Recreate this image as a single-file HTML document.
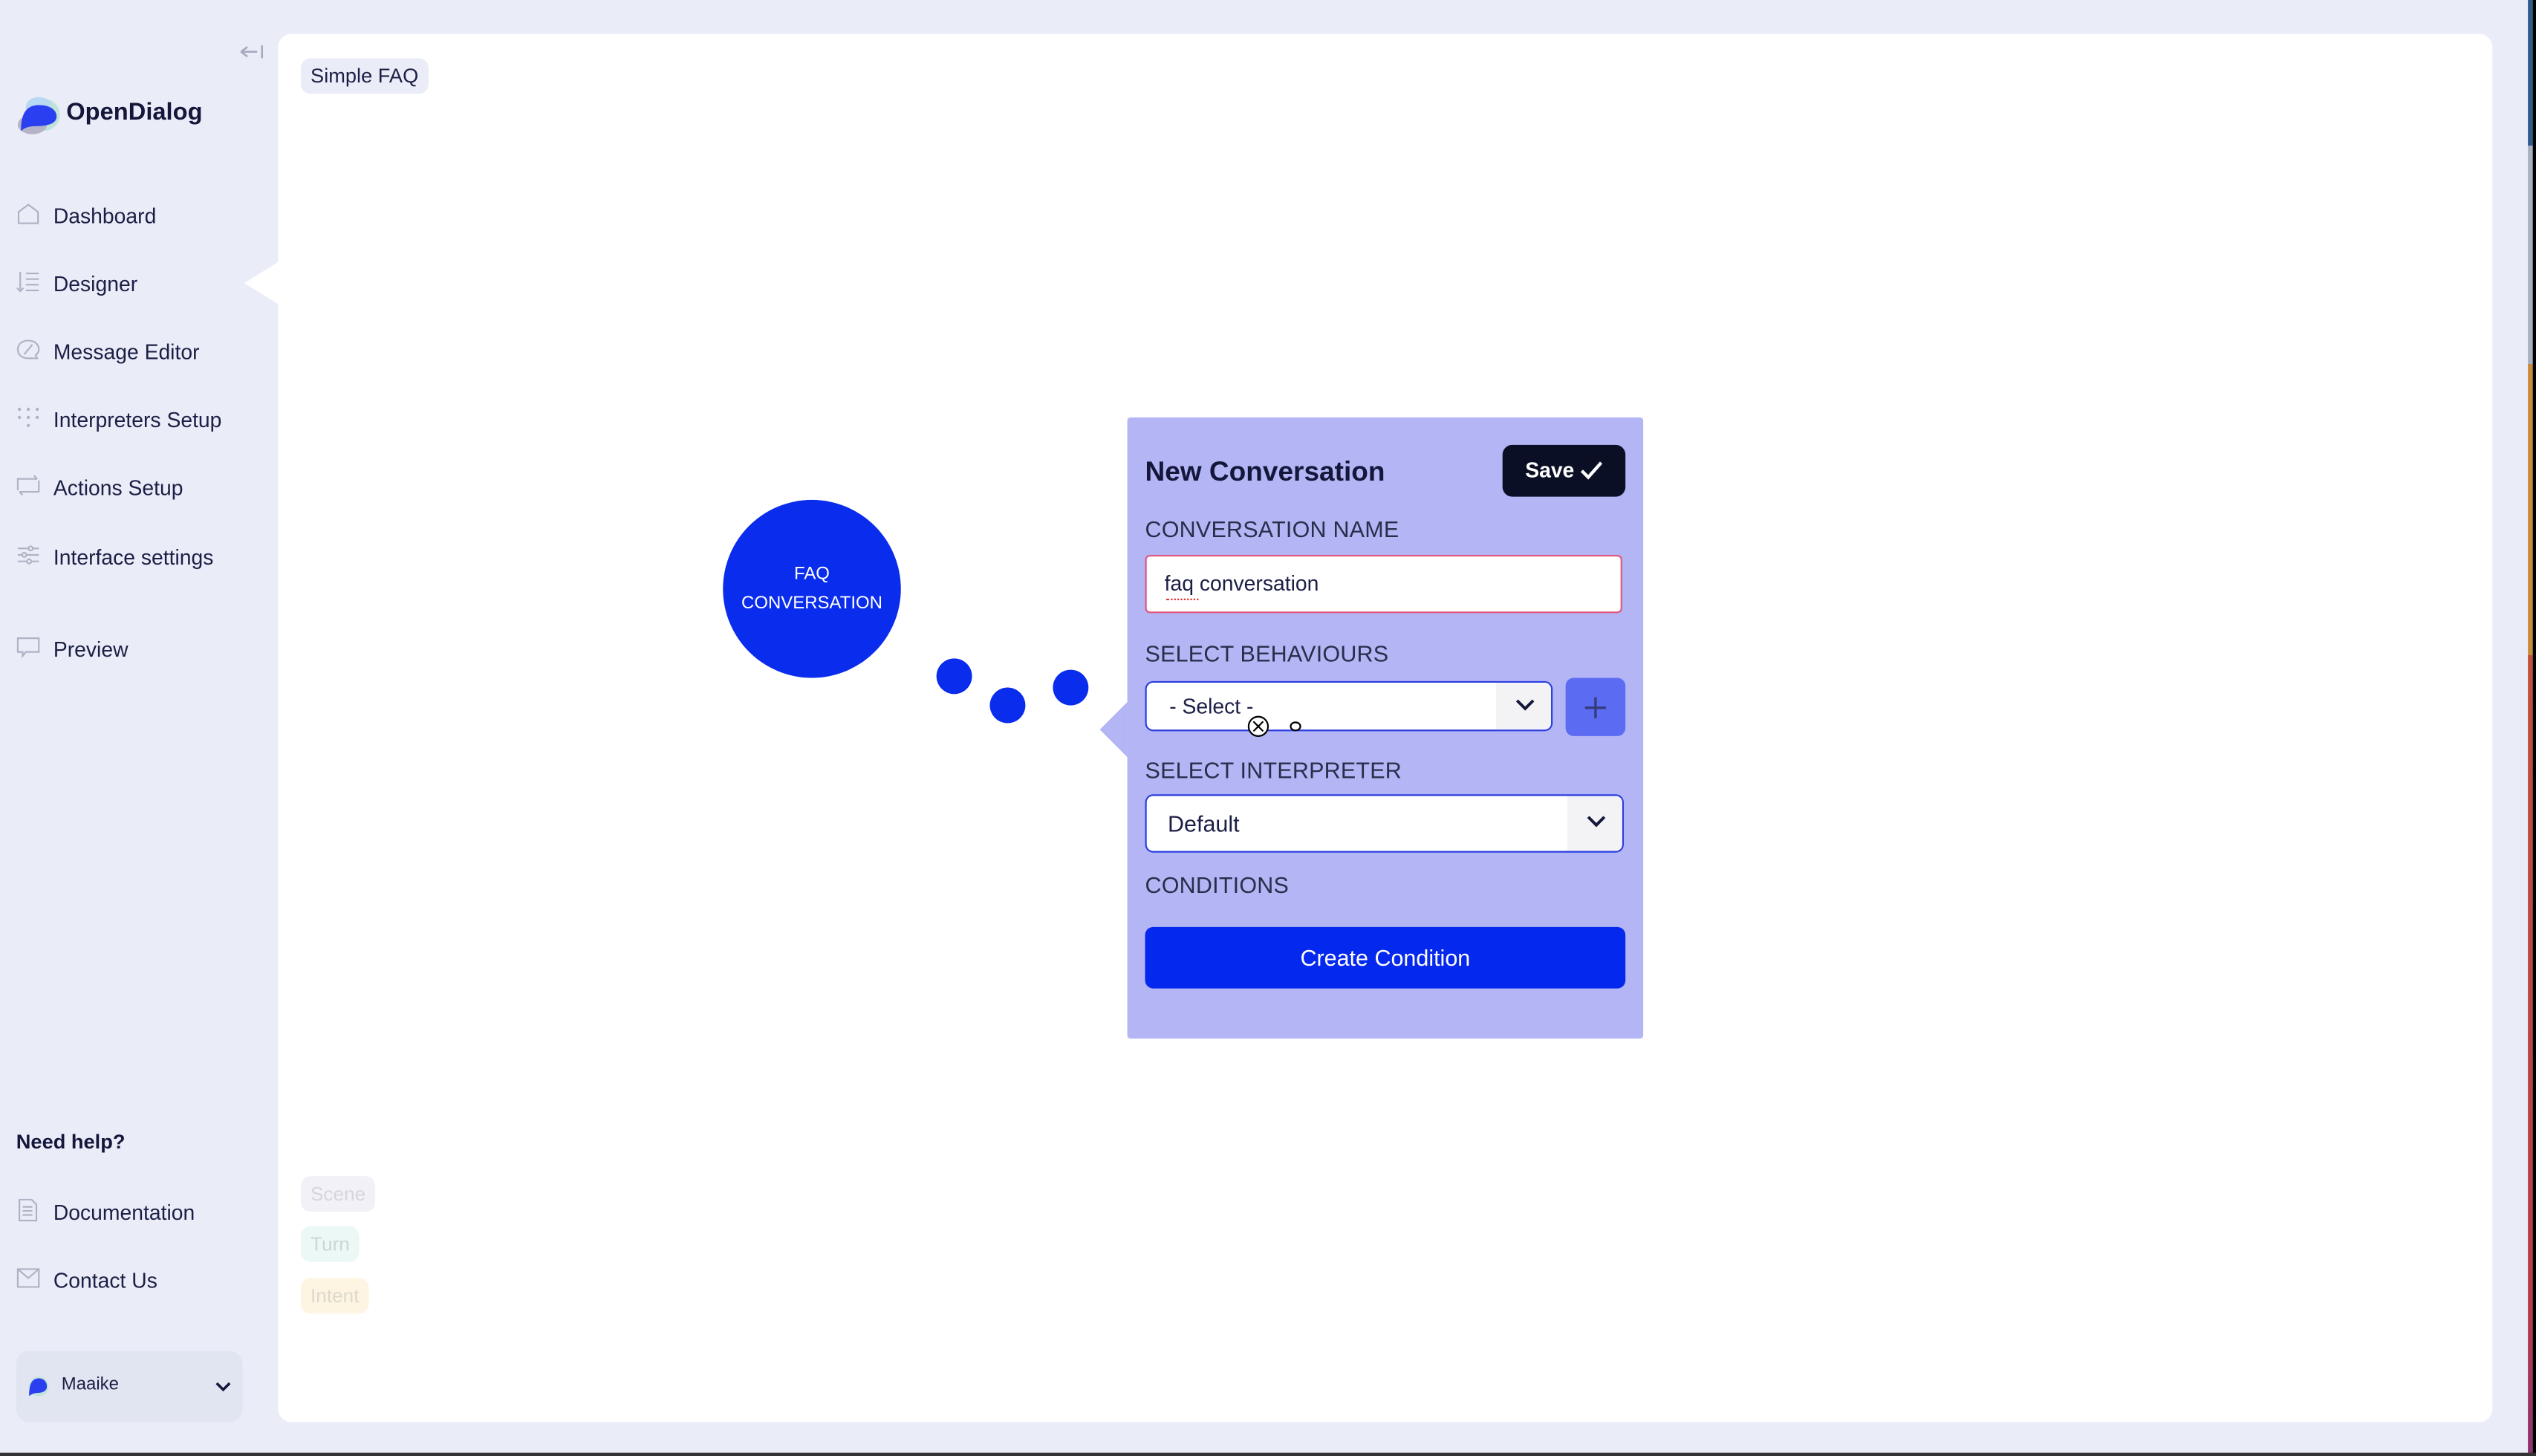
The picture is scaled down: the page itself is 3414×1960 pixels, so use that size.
<!DOCTYPE html>
<html><head><meta charset="utf-8"><style>
html,body{margin:0;padding:0;width:3414px;height:1960px;overflow:hidden;background:#eaedf8;}
#w{position:absolute;left:0;top:0;width:1568px;height:900px;transform:scale(2.17730,2.17778);transform-origin:0 0;font-family:"Liberation Sans",sans-serif;color:#1a1c3a;}
.a{position:absolute;}
.nav{position:absolute;left:10px;font-size:13px;color:#1c1f45;}
.nav svg{position:absolute;left:0;top:-1px;}
.nav span{position:absolute;left:23px;top:0;white-space:nowrap;}
.lbl{position:absolute;left:11px;font-size:14px;color:#2a2d4a;letter-spacing:.1px;}
</style></head><body><div id="w">
<div class="a" style="left:1563px;top:0;width:2.5px;height:900px;background:linear-gradient(#2f5a8e 0%,#2f5a8e 10%,#a8b0c0 10%,#a8b0c0 25%,#c98a3a 25%,#c98a3a 45%,#c0503a 45%,#b83a48 90%,#8a3070 100%)"></div>
<div class="a" style="left:1565.5px;top:0;width:2.5px;height:900px;background:#000"></div>
<div class="a" style="left:0;top:898px;width:1568px;height:2px;background:#333"></div>

<svg class="a" style="left:148px;top:26px" width="16" height="12" viewBox="0 0 16 12"><path d="M1 6H11M1 6L5 3M1 6L5 9M14 2V10" stroke="#a7a9bd" stroke-width="1.2" fill="none"/></svg>

<svg class="a" style="left:10px;top:58px" width="28" height="26" viewBox="0 0 28 26"><ellipse cx="17" cy="13" rx="10" ry="10" fill="#bfe3d8"/><ellipse cx="14" cy="8" rx="8" ry="6" fill="#b8d8f4"/><ellipse cx="10" cy="19" rx="9" ry="6" fill="#b5b3c8"/><path d="M3 23C3 14 5 7 14 7C21 7 25 10 25 14C25 19 18 20 12 20C8 20 5 21 3 23Z" fill="#2a3ff0"/></svg>
<div class="a" style="left:41px;top:61px;font-size:15px;font-weight:bold;color:#14163a">OpenDialog</div>

<div class="nav" style="top:126px"><svg width="15" height="14" viewBox="0 0 15 14"><path d="M1.5 6L7.5 1.5L13.5 6V13H1.5Z" stroke="#b0b2c4" fill="none" stroke-width="1"/></svg><span>Dashboard</span></div>
<div class="nav" style="top:168px"><svg width="15" height="14" viewBox="0 0 15 14"><path d="M2.5 1V13M0.5 11L2.5 13L4.5 11M6 2H14M6 5.5H14M6 9H14M6 12.5H14" stroke="#b0b2c4" fill="none" stroke-width="1"/></svg><span>Designer</span></div>
<div class="nav" style="top:210px"><svg width="15" height="14" viewBox="0 0 15 14"><path d="M7.5 1.5C4 1.5 1 3.5 1 7C1 10.5 4 12.5 7.5 12.5H13L12 10.5C13.5 9.5 14 8.3 14 7C14 3.5 11 1.5 7.5 1.5ZM5 10L10 4" stroke="#b0b2c4" fill="none" stroke-width="1"/></svg><span>Message Editor</span></div>
<div class="nav" style="top:252px"><svg width="15" height="14" viewBox="0 0 15 14"><g fill="#b0b2c4"><circle cx="2" cy="2" r="1"/><circle cx="7.5" cy="2" r="1"/><circle cx="13" cy="2" r="1"/><circle cx="2" cy="7" r="1"/><circle cx="7.5" cy="7" r="1"/><circle cx="13" cy="7" r="1"/><circle cx="7.5" cy="12" r="1"/></g></svg><span>Interpreters Setup</span></div>
<div class="nav" style="top:294px"><svg width="15" height="14" viewBox="0 0 15 14"><path d="M1 10V3H13M11 1L13 3M14 4V11H2M4 13L2 11" stroke="#b0b2c4" fill="none" stroke-width="1"/></svg><span>Actions Setup</span></div>
<div class="nav" style="top:337px"><svg width="15" height="14" viewBox="0 0 15 14"><path d="M1 3H14M1 7H14M1 11H14" stroke="#b0b2c4" stroke-width="1"/><g fill="#eaedf8" stroke="#b0b2c4"><circle cx="9" cy="3" r="1.3"/><circle cx="5" cy="7" r="1.3"/><circle cx="8" cy="11" r="1.3"/></g></svg><span>Interface settings</span></div>
<div class="nav" style="top:394px"><svg width="15" height="14" viewBox="0 0 15 14"><path d="M1 1.5H14V10H6L4 12.5V10H1Z" stroke="#b0b2c4" fill="none" stroke-width="1"/></svg><span>Preview</span></div>

<div class="a" style="left:10px;top:699px;font-size:12.5px;font-weight:bold;color:#14163a">Need help?</div>
<div class="nav" style="top:742px"><svg width="15" height="14" viewBox="0 0 15 14"><path d="M2 0.5H9.5L12.5 3.5V13.5H2ZM4 5H10M4 7.5H10M4 10H10" stroke="#b0b2c4" fill="none" stroke-width="1"/></svg><span>Documentation</span></div>
<div class="nav" style="top:784px"><svg width="15" height="14" viewBox="0 0 15 14"><path d="M1 1.5H14V12.5H1ZM1 1.5L7.5 7L14 1.5" stroke="#b0b2c4" fill="none" stroke-width="1"/></svg><span>Contact Us</span></div>

<div class="a" style="left:10px;top:835px;width:140px;height:44px;background:#e1e5f2;border-radius:8px"></div>
<svg class="a" style="left:16px;top:850px" width="15" height="14" viewBox="0 0 15 14"><circle cx="8" cy="7" r="6" fill="#bfe3d8"/><path d="M2 13C2 7 3 2 8 2C11 2 13 4 13 7C13 10 10 11 7 11C5 11 3 12 2 13Z" fill="#2a3ff0"/></svg>
<div class="a" style="left:38px;top:850px;font-size:11px;color:#1c1f45">Maaike</div>
<svg class="a" style="left:133px;top:853px" width="10" height="8" viewBox="0 0 10 8"><path d="M1 2L5 6L9 2" stroke="#14163a" stroke-width="1.6" fill="none"/></svg>

<div class="a" style="left:172px;top:21px;width:1369px;height:858px;background:#fff;border-radius:8px"></div>
<div class="a" style="left:151px;top:175px;width:0;height:0;border-top:13px solid transparent;border-bottom:13px solid transparent;border-right:21px solid #fff;margin-top:-13px"></div>
<div class="a" style="left:186px;top:36px;padding:4px 6px;font-size:12.5px;background:#eaedf8;border-radius:6px;color:#1c1f45">Simple FAQ</div>

<div class="a" style="left:186px;top:727px;padding:4px 6px;font-size:12px;background:#f1f1f7;border-radius:6px;color:#d5d6de">Scene</div>
<div class="a" style="left:186px;top:758px;padding:4px 6px;font-size:12px;background:#ebf8f5;border-radius:6px;color:#cdd6d5">Turn</div>
<div class="a" style="left:186px;top:790px;padding:4px 6px;font-size:12px;background:#fdf5e2;border-radius:6px;color:#dcd8cc">Intent</div>

<div class="a" style="left:447px;top:309px;width:110px;height:110px;border-radius:50%;background:#0a2cec;color:#fff;font-size:11px;text-align:center;line-height:18px;display:flex;align-items:center;justify-content:center">FAQ<br>CONVERSATION</div>
<div class="a" style="left:579px;top:407px;width:22px;height:22px;border-radius:50%;background:#0a2cec"></div>
<div class="a" style="left:612px;top:425px;width:22px;height:22px;border-radius:50%;background:#0a2cec"></div>
<div class="a" style="left:651px;top:414px;width:22px;height:22px;border-radius:50%;background:#0a2cec"></div>

<div class="a" style="left:680px;top:434px;width:0;height:0;border-top:17px solid transparent;border-bottom:17px solid transparent;border-right:17px solid #b3b5f5"></div>
<div class="a" style="left:697px;top:258px;width:319px;height:384px;background:#b3b5f5;border-radius:2px">
  <div class="a" style="left:11px;top:24px;font-size:17px;font-weight:bold;color:#14163a">New Conversation</div>
  <div class="a" style="left:232px;top:17px;width:76px;height:32px;background:#0b0f26;border-radius:6px;color:#fff;font-size:13px;font-weight:bold"><span style="position:absolute;left:14px;top:8px">Save</span><svg style="position:absolute;left:48px;top:10px" width="14" height="12" viewBox="0 0 14 12"><path d="M1 6L5 10L13 1" stroke="#fff" stroke-width="2" fill="none"/></svg></div>
  <div class="lbl" style="top:61px">CONVERSATION NAME</div>
  <div class="a" style="left:11px;top:85px;width:293px;height:34px;background:#fff;border:1.5px solid #e0557f;border-radius:3px"><span style="position:absolute;left:11px;top:9px;font-size:13px;color:#1c1f45">faq conversation</span><div style="position:absolute;left:12px;top:26px;width:20px;border-top:1.5px dotted #e03030"></div></div>
  <div class="lbl" style="top:138px">SELECT BEHAVIOURS</div>
  <div class="a" style="left:11px;top:163px;width:250px;height:29px;background:#fff;border:1.5px solid #2b3de0;border-radius:5px;overflow:hidden"><span style="position:absolute;left:14px;top:7px;font-size:13px;color:#1c1f45">- Select -</span><div style="position:absolute;right:0;top:0;width:34px;height:29px;background:#f3f3f6"></div><svg style="position:absolute;right:10px;top:10px" width="12" height="8" viewBox="0 0 12 8"><path d="M1 1L6 6L11 1" stroke="#14163a" stroke-width="1.8" fill="none"/></svg></div>
  <div class="a" style="left:271px;top:161px;width:37px;height:36px;background:#5c6cf2;border-radius:5px"><svg style="position:absolute;left:11px;top:11px" width="15" height="15" viewBox="0 0 15 15"><path d="M7.5 1V14M1 7.5H14" stroke="#353a7a" stroke-width="1.5"/></svg></div>
  <div class="lbl" style="top:210px">SELECT INTERPRETER</div>
  <div class="a" style="left:11px;top:233px;width:294px;height:34px;background:#fff;border:1.5px solid #2b3de0;border-radius:5px;overflow:hidden"><span style="position:absolute;left:13px;top:9px;font-size:14px;color:#1c1f45">Default</span><div style="position:absolute;right:0;top:0;width:34px;height:34px;background:#f3f3f6"></div><svg style="position:absolute;right:10px;top:12px" width="12" height="8" viewBox="0 0 12 8"><path d="M1 1L6 6L11 1" stroke="#14163a" stroke-width="1.8" fill="none"/></svg></div>
  <div class="lbl" style="top:281px">CONDITIONS</div>
  <div class="a" style="left:11px;top:315px;width:297px;height:38px;background:#0528ee;border-radius:5px;color:#fff;font-size:14px;text-align:center;line-height:38px">Create Condition</div>
</div>
<svg class="a" style="left:770px;top:441px" width="40" height="16" viewBox="0 0 40 16"><circle cx="8" cy="8" r="6" fill="#fff" stroke="#000"/><path d="M5 5L11 11M11 5L5 11" stroke="#000"/><ellipse cx="31" cy="8" rx="3" ry="2.5" fill="#fff" stroke="#000"/></svg>
</div></body></html>
